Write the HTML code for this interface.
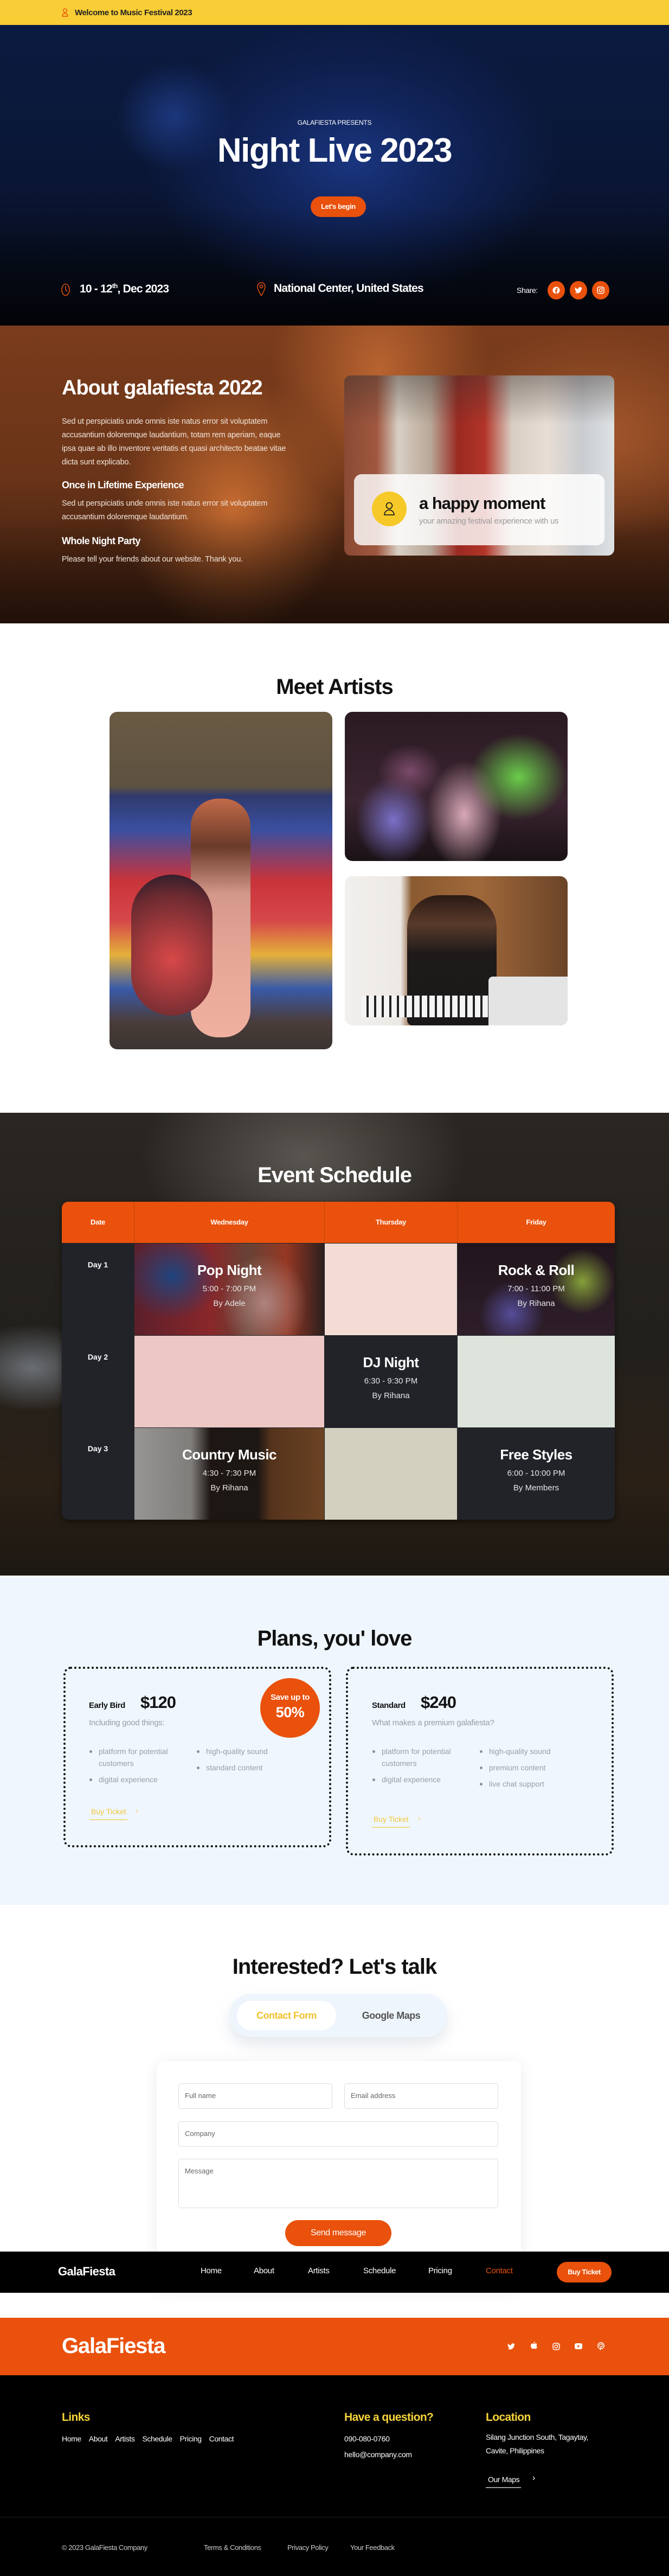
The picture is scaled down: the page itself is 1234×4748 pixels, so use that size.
<!DOCTYPE html>
<html><head><meta charset="utf-8">
<style>
*{box-sizing:border-box;margin:0;padding:0}
body{width:1234px;height:4748px;position:relative;font-family:"Liberation Sans",sans-serif;background:#fff;overflow:hidden}
.a{position:absolute}
.c{text-align:center}
.b{font-weight:bold}
.w{color:#fff}
.soc{width:32px;height:34px;border-radius:50%;background:#e9510c;display:flex;align-items:center;justify-content:center}
.cell{position:absolute;text-align:center;color:#fff}
.cell h3{font-size:26px;margin-top:34px;letter-spacing:-.5px}
.cell p{font-size:15px;margin-top:10px;color:#e6e6e6}
.inp{position:absolute;border:1px solid #ddd;border-radius:5px;font-size:13px;color:#666;padding:14px 11px;background:#fff}
ul.li{list-style:none;font-size:14px;color:#9a9ea4}
ul.li li{position:relative;padding-left:18px;line-height:22px;margin-bottom:8px}
ul.li li:before{content:"";position:absolute;left:1px;top:9px;width:5px;height:5px;border-radius:50%;background:#8a8e94}
</style></head><body>

<div class="a" style="left:0;top:0;width:1234px;height:46px;background:#f8cd35"></div>
<svg class="a" style="left:114px;top:15px" width="12" height="16" viewBox="0 0 12 16"><circle cx="6" cy="4.5" r="3.3" fill="none" stroke="#e9510c" stroke-width="1.4"/><path d="M1 15h10c0-3-2-5.5-5-5.5S1 12 1 15z" fill="none" stroke="#e9510c" stroke-width="1.4"/></svg>
<div class="a b" style="left:138px;top:15px;font-size:15px;color:#222;letter-spacing:-.4px">Welcome to Music Festival 2023</div>

<div class="a" style="left:0;top:46px;width:1234px;height:554px;background:radial-gradient(ellipse 380px 260px at 650px 250px,#1a3680 0%,#11245a 45%,transparent 100%),radial-gradient(ellipse 110px 100px at 325px 170px,#1d3a82,transparent),linear-gradient(180deg,#0b1a40 0%,#0a1634 55%,#05080f 100%)"></div>
<div class="a" style="left:0;top:380px;width:1234px;height:220px;background:linear-gradient(180deg,transparent,rgba(0,0,0,.55))"></div>
<div class="a c w" style="left:0;width:1234px;top:219px;font-size:12px;letter-spacing:-.2px">GALAFIESTA PRESENTS</div>
<div class="a c w b" style="left:0;width:1234px;top:242px;font-size:62px;letter-spacing:-1.5px">Night Live 2023</div>
<div class="a c w b" style="left:573px;top:362px;width:102px;height:38px;border-radius:19px;background:#e9510c;font-size:13px;line-height:38px;letter-spacing:-.4px">Let's begin</div>
<svg class="a" style="left:113px;top:522px" width="16" height="24" viewBox="0 0 16 24"><ellipse cx="8" cy="12" rx="7" ry="10.5" fill="none" stroke="#e9510c" stroke-width="1.5"/><path d="M8 5v7l3 3" fill="none" stroke="#e9510c" stroke-width="1.5"/></svg>
<div class="a w b" style="left:147px;top:520px;font-size:21px;letter-spacing:-.8px">10 - 12<sup style="font-size:12px">th</sup>, Dec 2023</div>
<svg class="a" style="left:474px;top:520px" width="16" height="26" viewBox="0 0 16 26"><path d="M8 25C4 18 1 13 1 8a7 7 0 0 1 14 0c0 5-3 10-7 17z" fill="none" stroke="#e9510c" stroke-width="1.5"/><circle cx="8" cy="8" r="2.8" fill="none" stroke="#e9510c" stroke-width="1.5"/></svg>
<div class="a w b" style="left:505px;top:520px;font-size:21px;letter-spacing:-.8px">National Center, United States</div>
<div class="a w" style="left:953px;top:527px;font-size:14px;letter-spacing:-.4px">Share:</div>
<div class="a soc" style="left:1010px;top:518px"><svg width="14" height="14" viewBox="0 0 14 14"><circle cx="7" cy="7" r="6.5" fill="#fff"/><path d="M7.8 14V8.6h1.6l.3-1.9H7.8V5.6c0-.5.2-.9.9-.9h1V3.1c-.3 0-.8-.1-1.4-.1-1.4 0-2.3.8-2.300 2.4v1.3H4.4v1.9H6V14z" fill="#e9510c"/></svg></div>
<div class="a soc" style="left:1051px;top:518px"><svg width="14" height="12" viewBox="0 0 24 20"><path d="M24 2.4c-.9.4-1.8.7-2.8.8 1-.6 1.8-1.6 2.2-2.7-1 .6-2 1-3.1 1.2A4.9 4.9 0 0 0 11.9 6 14 14 0 0 1 1.7.9a4.9 4.9 0 0 0 1.5 6.6c-.8 0-1.6-.2-2.2-.6 0 2.4 1.7 4.4 3.9 4.8-.7.2-1.5.2-2.2.1.6 2 2.4 3.4 4.6 3.4A9.9 9.9 0 0 1 0 17.3 14 14 0 0 0 7.5 19.5c9.1 0 14-7.5 14-14v-.6c1-.7 1.8-1.6 2.5-2.5z" fill="#fff"/></svg></div>
<div class="a soc" style="left:1092px;top:518px"><svg width="14" height="14" viewBox="0 0 14 14"><rect x="1" y="1" width="12" height="12" rx="3.5" fill="none" stroke="#fff" stroke-width="1.5"/><circle cx="7" cy="7" r="2.8" fill="none" stroke="#fff" stroke-width="1.5"/><circle cx="10.5" cy="3.5" r=".8" fill="#fff"/></svg></div>

<div class="a" style="left:0;top:600px;width:1234px;height:549px;background:radial-gradient(ellipse 260px 300px at 430px 330px,#c46a30 0%,transparent 80%),radial-gradient(ellipse 200px 260px at 700px 80px,#b86330,transparent),radial-gradient(ellipse 300px 200px at 1100px 200px,#a5582c,transparent),linear-gradient(180deg,#7a3c1c 0%,#6a3418 50%,#331a0e 100%)"></div>
<div class="a" style="left:0;top:950px;width:1234px;height:199px;background:linear-gradient(180deg,transparent,rgba(20,10,6,.6))"></div>
<div class="a w b" style="left:114px;top:694px;font-size:38px;letter-spacing:-1px">About galafiesta 2022</div>
<div class="a" style="left:114px;top:765px;width:420px;font-size:14.5px;line-height:25px;color:#f1e4da;letter-spacing:-.2px">Sed ut perspiciatis unde omnis iste natus error sit voluptatem accusantium doloremque laudantium, totam rem aperiam, eaque ipsa quae ab illo inventore veritatis et quasi architecto beatae vitae dicta sunt explicabo.</div>
<div class="a w b" style="left:114px;top:884px;font-size:18px;letter-spacing:-.6px">Once in Lifetime Experience</div>
<div class="a" style="left:114px;top:916px;width:420px;font-size:14.5px;line-height:25px;color:#f1e4da;letter-spacing:-.2px">Sed ut perspiciatis unde omnis iste natus error sit voluptatem accusantium doloremque laudantium.</div>
<div class="a w b" style="left:114px;top:987px;font-size:18px;letter-spacing:-.6px">Whole Night Party</div>
<div class="a" style="left:114px;top:1019px;font-size:14.5px;line-height:25px;color:#f1e4da;letter-spacing:-.2px">Please tell your friends about our website. Thank you.</div>
<div class="a" style="left:635px;top:692px;width:498px;height:332px;border-radius:12px;overflow:hidden;background:linear-gradient(90deg,#8a4a34 0%,#a0573f 12%,#d8cfc4 20%,#b8a898 32%,#9a2a22 42%,#b23428 52%,#d9cdc3 62%,#e8ddd4 75%,#c9ccd0 88%,#dfe2e4 100%)">
<div class="a" style="left:0;top:0;width:498px;height:90px;background:linear-gradient(180deg,rgba(60,50,45,.45),transparent)"></div>
<div class="a" style="left:18px;top:182px;width:462px;height:131px;border-radius:14px;background:rgba(255,255,255,.82)"></div>
<div class="a" style="left:51px;top:214px;width:64px;height:64px;border-radius:50%;background:#f6c928"></div>
<svg class="a" style="left:72px;top:233px" width="22" height="26" viewBox="0 0 22 26"><circle cx="11" cy="7" r="5.5" fill="none" stroke="#222" stroke-width="1.8"/><path d="M2 24h18c0-5-4-9-9-9s-9 4-9 9z" fill="none" stroke="#222" stroke-width="1.8"/></svg>
<div class="a b" style="left:138px;top:218px;font-size:31px;color:#111;letter-spacing:-1px">a happy moment</div>
<div class="a" style="left:138px;top:260px;font-size:15px;color:#9a9a9a;letter-spacing:-.3px">your amazing festival experience with us</div>
</div>

<div class="a c b" style="left:0;width:1234px;top:1244px;font-size:40px;color:#111;letter-spacing:-1px">Meet Artists</div>
<div class="a" style="left:202px;top:1312px;width:411px;height:622px;border-radius:14px;overflow:hidden;background:linear-gradient(180deg,#6a5a44 0%,#5d5240 22%,#2f3a6e 25%,#3a4fa0 35%,#c9333a 50%,#d6484a 62%,#e4b03a 72%,#3a5aa8 82%,#4a3c3a 92%,#3a3430 100%)">
<div class="a" style="left:150px;top:160px;width:110px;height:440px;border-radius:50px;background:linear-gradient(180deg,#c26a4a,#6a3a28 20%,#d4988a 40%,#e8a898 70%,#f0b0a0)"></div>
<div class="a" style="left:40px;top:300px;width:150px;height:260px;border-radius:80px;background:radial-gradient(circle at 50% 60%,#d84848,#6a2a30 70%,#1a1a2a)"></div>
</div>
<div class="a" style="left:636px;top:1312px;width:411px;height:275px;border-radius:14px;overflow:hidden;background:radial-gradient(ellipse 60px 50px at 120px 110px,#7a4a6a,transparent),radial-gradient(ellipse 90px 80px at 320px 120px,#6acc4a,transparent),radial-gradient(ellipse 70px 100px at 220px 190px,#d8a8b8,transparent),radial-gradient(ellipse 70px 80px at 90px 200px,#7a70c8,transparent),linear-gradient(180deg,#2a1a22,#3a2430 60%,#1a1216)"></div>
<div class="a" style="left:636px;top:1615px;width:411px;height:275px;border-radius:14px;overflow:hidden;background:linear-gradient(90deg,#f2f0ee 0%,#ece8e4 25%,#8a5a30 30%,#a0683a 60%,#6a4428 100%)">
<div class="a" style="left:115px;top:35px;width:165px;height:240px;border-radius:60px 60px 10px 10px;background:linear-gradient(180deg,#2a1a14 0%,#5a3a2a 22%,#1e1a1a 45%,#1a1818 100%)"></div>
<div class="a" style="left:30px;top:220px;width:260px;height:40px;background:repeating-linear-gradient(90deg,#f4f4f4 0 10px,#222 10px 14px)"></div>
<div class="a" style="left:265px;top:185px;width:146px;height:90px;background:#e4e4e4;border-radius:8px 0 0 0"></div>
</div>

<div class="a" style="left:0;top:2051px;width:1234px;height:853px;background:radial-gradient(ellipse 300px 200px at 560px 80px,#5a5550,transparent),radial-gradient(ellipse 140px 80px at 60px 470px,#6a6e74,transparent),linear-gradient(180deg,#2a2622 0%,#22201c 50%,#2a2016 80%,#1c1812 100%)"></div>
<div class="a c w b" style="left:0;width:1234px;top:2144px;font-size:40px;letter-spacing:-1px">Event Schedule</div>
<div class="a" style="left:114px;top:2215px;width:1020px;height:586px;border-radius:12px;overflow:hidden;background:#212328;box-shadow:0 4px 12px rgba(0,0,0,.5)">
<div class="a" style="left:0;top:0;width:1020px;height:76px;background:#e9510c"></div>
<div class="a" style="left:133px;top:0;width:1px;height:76px;background:rgba(0,0,0,.15)"></div>
<div class="a" style="left:484px;top:0;width:1px;height:76px;background:rgba(0,0,0,.15)"></div>
<div class="a" style="left:729px;top:0;width:1px;height:76px;background:rgba(0,0,0,.15)"></div>
<div class="a c w b" style="left:0;width:133px;top:30px;font-size:13px;letter-spacing:-.3px">Date</div>
<div class="a c w b" style="left:134px;width:350px;top:30px;font-size:13px;letter-spacing:-.3px">Wednesday</div>
<div class="a c w b" style="left:485px;width:244px;top:30px;font-size:13px;letter-spacing:-.3px">Thursday</div>
<div class="a c w b" style="left:730px;width:290px;top:30px;font-size:13px;letter-spacing:-.3px">Friday</div>
<div class="a c w b" style="left:0;width:133px;top:108px;font-size:14px">Day 1</div>
<div class="a c w b" style="left:0;width:133px;top:278px;font-size:14px">Day 2</div>
<div class="a c w b" style="left:0;width:133px;top:447px;font-size:14px">Day 3</div>
<div class="cell" style="left:134px;top:77px;width:350px;height:169px;background:radial-gradient(ellipse 80px 90px at 240px 110px,#e8b0a8,transparent),radial-gradient(ellipse 90px 80px at 70px 60px,#2a5aa8,transparent),linear-gradient(90deg,#7a2a3a,#b83438 40%,#8a5a48 60%,#c84a30 80%,#3a2a28)"><div style="background:rgba(0,0,0,.25);position:absolute;inset:0"></div><div style="position:relative"><h3>Pop Night</h3><p>5:00 - 7:00 PM</p><p>By Adele</p></div></div>
<div class="cell" style="left:485px;top:77px;width:244px;height:169px;background:#f3dcd3"></div>
<div class="cell" style="left:730px;top:77px;width:290px;height:169px;background:radial-gradient(ellipse 60px 60px at 100px 130px,#6a60c0,transparent),radial-gradient(ellipse 60px 60px at 230px 70px,#a8c848,transparent),linear-gradient(180deg,#2a1a24,#3a2634)"><div style="background:rgba(0,0,0,.2);position:absolute;inset:0"></div><div style="position:relative"><h3>Rock &amp; Roll</h3><p>7:00 - 11:00 PM</p><p>By Rihana</p></div></div>
<div class="cell" style="left:134px;top:247px;width:350px;height:169px;background:#ecc7c4"></div>
<div class="cell" style="left:485px;top:247px;width:244px;height:169px"><h3>DJ Night</h3><p>6:30 - 9:30 PM</p><p>By Rihana</p></div>
<div class="cell" style="left:730px;top:247px;width:290px;height:169px;background:#dde4dc"></div>
<div class="cell" style="left:134px;top:417px;width:350px;height:169px;background:linear-gradient(90deg,#d8d6d4 0%,#b8b4b0 30%,#2a201c 40%,#2a221e 65%,#7a4a28 72%,#9a6034 100%)"><div style="background:rgba(0,0,0,.3);position:absolute;inset:0"></div><div style="position:relative"><h3>Country Music</h3><p>4:30 - 7:30 PM</p><p>By Rihana</p></div></div>
<div class="cell" style="left:485px;top:417px;width:244px;height:169px;background:#d3d0c0"></div>
<div class="cell" style="left:730px;top:417px;width:290px;height:169px"><h3>Free Styles</h3><p>6:00 - 10:00 PM</p><p>By Members</p></div>
</div>

<div class="a" style="left:0;top:2907px;width:1234px;height:604px;background:#eff6fe"></div>
<div class="a c b" style="left:0;width:1234px;top:2998px;font-size:40px;color:#111;letter-spacing:-1px">Plans, you' love</div>
<div class="a" style="left:117px;top:3072px;width:494px;height:333px;border:4px dotted #111;border-radius:14px"></div>
<div class="a" style="left:638px;top:3072px;width:494px;height:348px;border:4px dotted #111;border-radius:14px"></div>
<div class="a c w b" style="left:480px;top:3093px;width:110px;height:110px;border-radius:50%;background:#e9510c;padding-top:27px;font-size:15px;letter-spacing:-.4px">Save up to<div style="font-size:27px;margin-top:4px">50%</div></div>
<div class="a b" style="left:164px;top:3135px;font-size:15px;color:#111;letter-spacing:-.4px">Early Bird</div>
<div class="a b" style="left:259px;top:3120px;font-size:31px;color:#111;letter-spacing:-1px">$120</div>
<div class="a" style="left:164px;top:3167px;font-size:15px;color:#9a9ea4;letter-spacing:-.3px">Including good things:</div>
<ul class="a li" style="left:164px;top:3217px;width:185px"><li>platform for potential customers</li><li>digital experience</li></ul>
<ul class="a li" style="left:362px;top:3217px;width:200px"><li>high-quality sound</li><li>standard content</li></ul>
<div class="a" style="left:165px;top:3331px;font-size:14px;color:#f0c83a;border-bottom:2px solid #f3dc88;padding:0 2px 6px 3px">Buy Ticket</div>
<div class="a" style="left:250px;top:3329px;font-size:15px;color:#f3d070">&#8250;</div>
<div class="a b" style="left:686px;top:3135px;font-size:15px;color:#111;letter-spacing:-.4px">Standard</div>
<div class="a b" style="left:776px;top:3120px;font-size:31px;color:#111;letter-spacing:-1px">$240</div>
<div class="a" style="left:686px;top:3167px;font-size:15px;color:#9a9ea4;letter-spacing:-.3px">What makes a premium galafiesta?</div>
<ul class="a li" style="left:686px;top:3217px;width:185px"><li>platform for potential customers</li><li>digital experience</li></ul>
<ul class="a li" style="left:884px;top:3217px;width:200px"><li>high-quality sound</li><li>premium content</li><li>live chat support</li></ul>
<div class="a" style="left:686px;top:3345px;font-size:14px;color:#f0c83a;border-bottom:2px solid #f3dc88;padding:0 2px 6px 3px">Buy Ticket</div>
<div class="a" style="left:771px;top:3343px;font-size:15px;color:#f3d070">&#8250;</div>

<div class="a c b" style="left:0;width:1234px;top:3603px;font-size:40px;color:#111;letter-spacing:-1px">Interested? Let's talk</div>
<div class="a" style="left:423px;top:3675px;width:402px;height:80px;border-radius:40px;background:#eef5fc;box-shadow:0 14px 26px rgba(180,190,205,.35)"></div>
<div class="a c b" style="left:437px;top:3688px;width:183px;height:54px;border-radius:27px;background:#fff;line-height:54px;font-size:18px;color:#f2c230;letter-spacing:-.5px">Contact Form</div>
<div class="a c b" style="left:630px;top:3688px;width:183px;line-height:54px;font-size:18px;color:#555;letter-spacing:-.5px">Google Maps</div>
<div class="a" style="left:289px;top:3799px;width:672px;height:420px;border-radius:14px;background:#fff;box-shadow:0 4px 30px rgba(0,0,0,.08)"></div>
<div class="inp" style="left:329px;top:3840px;width:284px;height:47px">Full name</div>
<div class="inp" style="left:635px;top:3840px;width:284px;height:47px">Email address</div>
<div class="inp" style="left:329px;top:3910px;width:590px;height:47px">Company</div>
<div class="inp" style="left:329px;top:3979px;width:590px;height:91px">Message</div>
<div class="a c w" style="left:526px;top:4092px;width:196px;height:48px;border-radius:24px;background:#e9510c;line-height:48px;font-size:16px;letter-spacing:-.4px">Send message</div>

<div class="a" style="left:0;top:4150px;width:1234px;height:76px;background:#000"></div>
<div class="a w b" style="left:107px;top:4174px;font-size:22px;letter-spacing:-.6px">GalaFiesta</div>
<div class="a w" style="left:370px;top:4177px;font-size:15px;letter-spacing:-.3px">Home</div>
<div class="a w" style="left:468px;top:4177px;font-size:15px;letter-spacing:-.3px">About</div>
<div class="a w" style="left:568px;top:4177px;font-size:15px;letter-spacing:-.3px">Artists</div>
<div class="a w" style="left:670px;top:4177px;font-size:15px;letter-spacing:-.3px">Schedule</div>
<div class="a w" style="left:790px;top:4177px;font-size:15px;letter-spacing:-.3px">Pricing</div>
<div class="a" style="left:896px;top:4177px;font-size:15px;color:#e9510c;letter-spacing:-.3px">Contact</div>
<div class="a c w b" style="left:1027px;top:4169px;width:101px;height:38px;border-radius:19px;background:#e9510c;line-height:38px;font-size:13px;letter-spacing:-.5px">Buy Ticket</div>

<div class="a" style="left:0;top:4272px;width:1234px;height:106px;background:#e9510c"></div>
<div class="a w b" style="left:114px;top:4302px;font-size:40px;letter-spacing:-1.2px">GalaFiesta</div>
<svg class="a" style="left:936px;top:4319px" width="14" height="12" viewBox="0 0 24 20"><path d="M24 2.4c-.9.4-1.8.7-2.8.8 1-.6 1.8-1.6 2.2-2.7-1 .6-2 1-3.1 1.2A4.9 4.9 0 0 0 11.9 6 14 14 0 0 1 1.7.9a4.9 4.9 0 0 0 1.5 6.6c-.8 0-1.6-.2-2.2-.6 0 2.4 1.7 4.4 3.9 4.8-.7.2-1.5.2-2.2.1.6 2 2.4 3.4 4.6 3.4A9.9 9.9 0 0 1 0 17.3 14 14 0 0 0 7.5 19.5c9.1 0 14-7.5 14-14v-.6c1-.7 1.8-1.6 2.5-2.5z" fill="#fff"/></svg>
<svg class="a" style="left:979px;top:4316px" width="12" height="15" viewBox="0 0 12 15"><path d="M8 0c0 1.5-1 3-2.6 3C5.3 1.5 6.5.2 8 0zM6 4c1 0 2-.7 3-.7 1.3 0 2.3.7 2.8 1.6C10 5.8 9.8 8.5 12 9.4c-.5 1.6-1.7 4-3 4-1 0-1.3-.6-2.6-.6s-1.6.6-2.6.6C2 13.4 0 10.3 0 7.6 0 5 1.7 3.4 3.3 3.4 4.4 3.4 5.2 4 6 4z" fill="#fff"/></svg>
<svg class="a" style="left:1019px;top:4318px" width="14" height="14" viewBox="0 0 14 14"><rect x="1" y="1" width="12" height="12" rx="3.5" fill="none" stroke="#fff" stroke-width="1.5"/><circle cx="7" cy="7" r="2.8" fill="none" stroke="#fff" stroke-width="1.5"/><circle cx="10.5" cy="3.5" r=".8" fill="#fff"/></svg>
<svg class="a" style="left:1060px;top:4319px" width="14" height="11" viewBox="0 0 14 11"><rect width="14" height="11" rx="3" fill="#fff"/><path d="M5.5 3v5l4-2.5z" fill="#e9510c"/></svg>
<svg class="a" style="left:1102px;top:4317px" width="13" height="16" viewBox="0 0 13 16"><circle cx="6.5" cy="6.5" r="5.7" fill="none" stroke="#fff" stroke-width="1.5"/><path d="M6.8 3.5c-2 0-3 1.2-3 2.5 0 .8.4 1.4 1 1.6M6.8 3.5c1.6 0 2.6 1 2.6 2.3 0 1.6-.9 2.6-2 2.6-.7 0-1-.5-.9-1L5 15" fill="none" stroke="#fff" stroke-width="1.3"/></svg>
<div class="a" style="left:0;top:4378px;width:1234px;height:370px;background:#000"></div>
<div class="a b" style="left:114px;top:4444px;font-size:21px;color:#f6d43a;letter-spacing:-.6px">Links</div>
<div class="a b" style="left:635px;top:4444px;font-size:21px;color:#f6d43a;letter-spacing:-.6px">Have a question?</div>
<div class="a b" style="left:896px;top:4444px;font-size:21px;color:#f6d43a;letter-spacing:-.6px">Location</div>
<div class="a w" style="left:114px;top:4487px;font-size:14px;letter-spacing:-.4px"><span style="margin-right:14px">Home</span><span style="margin-right:14px">About</span><span style="margin-right:14px">Artists</span><span style="margin-right:14px">Schedule</span><span style="margin-right:14px">Pricing</span><span>Contact</span></div>
<div class="a w" style="left:635px;top:4487px;font-size:14px;letter-spacing:-.3px">090-080-0760</div>
<div class="a w" style="left:635px;top:4516px;font-size:14px;letter-spacing:-.3px">hello@company.com</div>
<div class="a w" style="left:896px;top:4480px;width:215px;font-size:14px;line-height:25px;letter-spacing:-.4px">Silang Junction South, Tagaytay, Cavite, Philippines</div>
<div class="a w" style="left:896px;top:4562px;font-size:14px;letter-spacing:-.4px;border-bottom:2px solid #999;padding:0 3px 6px 4px">Our Maps</div>
<div class="a w" style="left:982px;top:4559px;font-size:16px">&#8250;</div>
<div class="a" style="left:0;top:4639px;width:1234px;height:1px;background:#1e1e1e"></div>
<div class="a" style="left:114px;top:4688px;font-size:13px;color:#ccc;letter-spacing:-.4px">© 2023 GalaFiesta Company</div>
<div class="a" style="left:376px;top:4688px;font-size:13px;color:#ccc;letter-spacing:-.4px">Terms &amp; Conditions</div>
<div class="a" style="left:530px;top:4688px;font-size:13px;color:#ccc;letter-spacing:-.4px">Privacy Policy</div>
<div class="a" style="left:646px;top:4688px;font-size:13px;color:#ccc;letter-spacing:-.4px">Your Feedback</div>
</body></html>
